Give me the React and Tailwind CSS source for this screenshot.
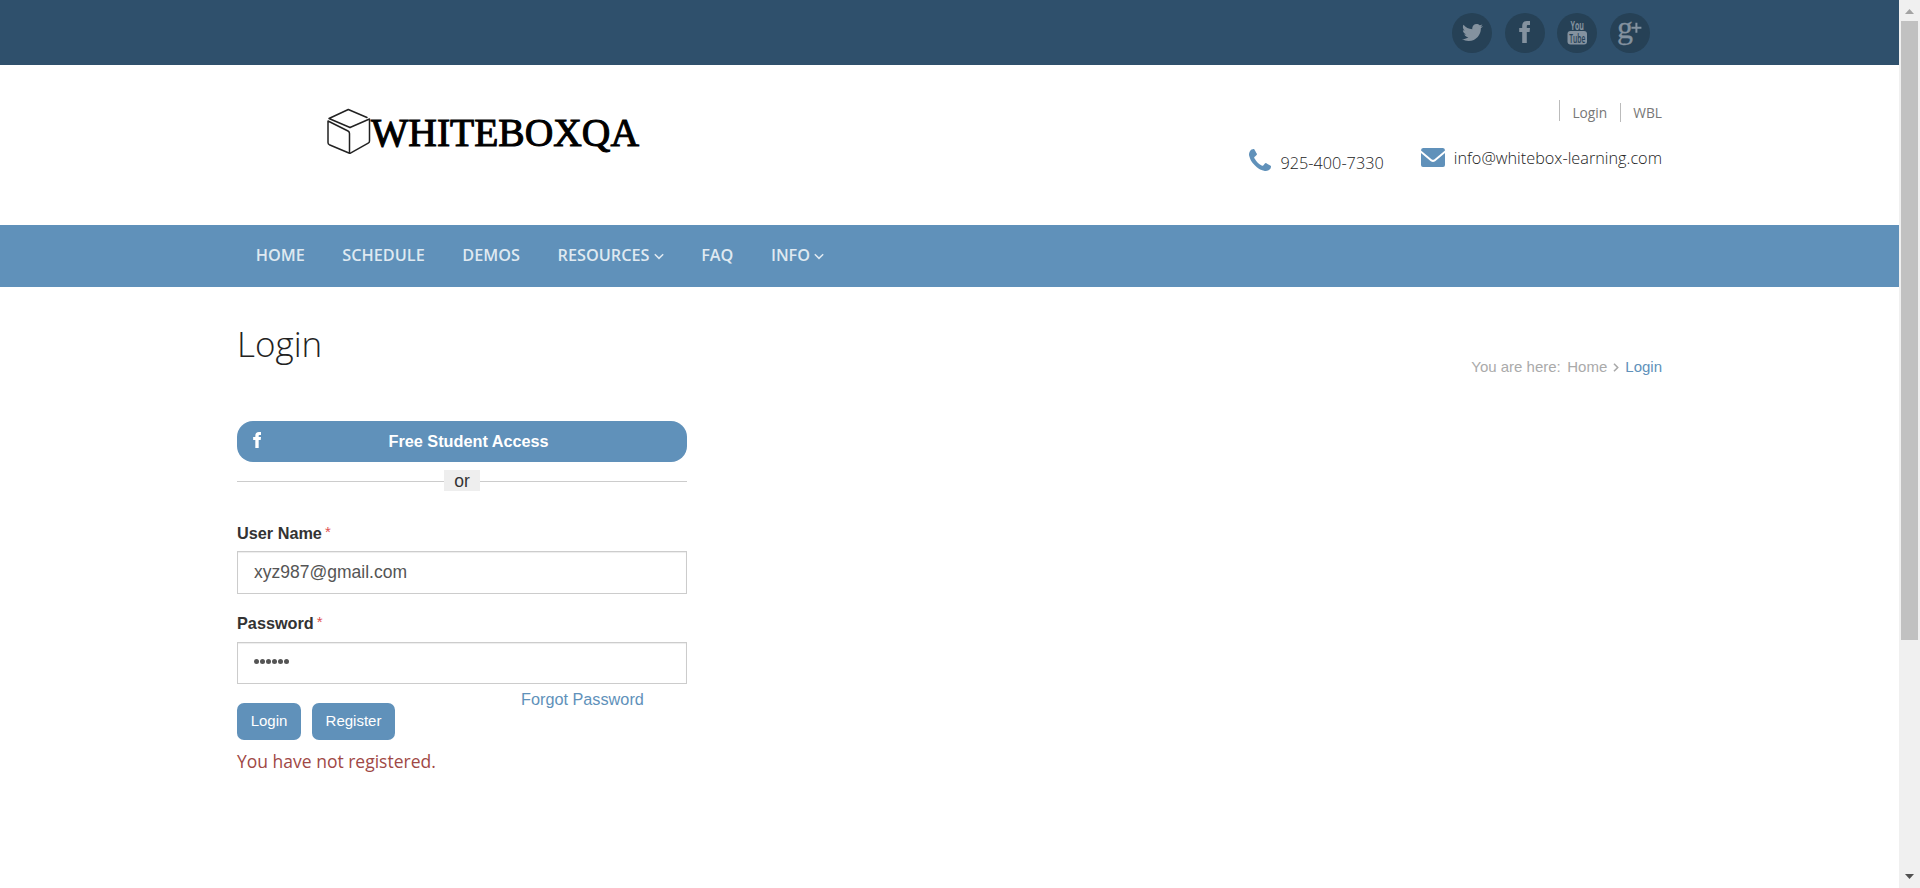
import { FaTwitter } from "react-icons/fa";

function FacebookMark({ className }) {
  return (
    <svg className={className} viewBox="0 0 11 22" fill="currentColor">
      <path d="M3.200 22V11H.2V7h3V5C3.200 1.800 5 0 8 0h3v4H9.200C8.100 4 7.800 4.400 7.800 5.300V7H11l-.4 4H7.800v11z" />
    </svg>
  );
}

function PhoneIcon({ className }) {
  return (
    <svg className={className} viewBox="0 0 1408 1408" fill="currentColor">
      <path d="M1408 1112q0 27-10 70.500T1377 1251q-21 50-122 106-94 51-186 51-27 0-53-3.500t-57.500-12.500-47-14.500T856 1357t-49-18q-98-35-175-83-127-79-264-216T152 776q-48-77-83-175-3-9-18-49t-20.500-55.500-14.500-47T3.500 392 0 339q0-92 51-186 56-101 106-122 25-11 68.500-21T296 0q14 0 21 3 18 6 53 76 11 19 30 54t35 63.500 31 53.500q3 4 17.500 25t21.500 35.500 7 28.500q0 20-28.500 50t-62 55-62 53-28.500 46q0 9 5 22.500t8.500 20.500 14 24 11.500 19q76 137 174 235t235 174q2 1 19 11.500t24 14 20.500 8.500 22.500 5q18 0 46-28.500t53-62 55-62 50-28.500q14 0 28.500 7t35.500 21.500 25 17.500q25 15 53.500 31t63.500 35 54 30q70 35 76 53 3 7 3 21z" />
    </svg>
  );
}

function YouTubeMark() {
  return (
    <svg width="22" height="38" viewBox="0 -6 22 38" fill="#84929f" className="overflow-visible">
      <text x="4.500" y="9.600" fontFamily="Open Sans, sans-serif" fontWeight="700" fontSize="12.500" textLength="13.500" lengthAdjust="spacingAndGlyphs">You</text>
      <rect x="1.500" y="11" width="19.500" height="13.500" rx="3" />
      <text x="3.300" y="22.500" fill="#264156" fontFamily="Open Sans, sans-serif" fontWeight="600" fontSize="12.500" textLength="16" lengthAdjust="spacingAndGlyphs">Tube</text>
    </svg>
  );
}

function GooglePlusMark() {
  return (
    <svg width="26" height="38" viewBox="0 0 26 38" fill="#84929f" stroke="#84929f" className="overflow-visible">
      <text x="0" y="23.500" fontFamily="Liberation Serif, serif" fontSize="32" strokeWidth="0.300">g</text>
      <path d="M19.400 8.700v10M14.400 13.700h10" strokeWidth="2" fill="none" />
    </svg>
  );
}

function Circle({ children }) {
  return (
    <a className="flex size-10 items-center justify-center rounded-full bg-[#264156] text-[#84929f]">{children}</a>
  );
}

function Logo() {
  return (
    <svg className="mt-[43px] ml-[89px]" width="316" height="52" viewBox="0 0 316 52">
      <g fill="none" stroke="#222" strokeWidth="1.500" strokeLinejoin="round" strokeLinecap="round">
        <path d="M41 9.500 22.300 1.500 3 10.500 24 19.500" />
        <path d="M2 13v21.500q0 1.500 1.300 2.200L23.500 45.300V25.500q0-1.700-1.500-2.500z" />
        <path d="M24 19.500 43.500 11v22q0 1.500-1.300 2.200L24 45.300" />
      </g>
      <text x="45" y="37.500" fontFamily="Liberation Serif, serif" fontSize="41" fill="#000" stroke="#000" strokeWidth="1.100" textLength="268" lengthAdjust="spacingAndGlyphs">WHITEBOXQA</text>
    </svg>
  );
}

function NavItem({ label, menu }) {
  return (
    <a className="flex items-center gap-[4px]">
      {label}
      {menu && (
        <svg className="mt-[3px]" width="10" height="7" viewBox="0 0 10 7" fill="none" stroke="currentColor" strokeWidth="1.500">
          <path d="M.8 1.200 5 5.400 9.200 1.200" />
        </svg>
      )}
    </a>
  );
}

function Field({ label, boxClass, children }) {
  return (
    <div>
      <label className="flex h-6 items-start text-[16.250px] leading-6 font-bold text-[#333]">
        {label}
        <span className="ml-[3px] text-[15px] leading-[22px] font-normal text-[#e05050]">*</span>
      </label>
      <div className={`flex items-center border border-[#ccc] px-[16px] text-[17.500px] text-[#555] shadow-[inset_0_1px_1px_rgba(0,0,0,0.075)] ${boxClass}`}>
        {children}
      </div>
    </div>
  );
}

export default function App() {
  return (
    <div className="flex h-[888px] w-[1920px] overflow-hidden bg-white font-['Liberation_Sans',Arial,sans-serif]">
      <div className="w-[1899px]">
        <div className="flex h-[65px] items-center gap-[12.700px] bg-[#2f506c] pl-[1452px]">
          <Circle><FaTwitter className="size-[21px]" /></Circle>
          <Circle><FacebookMark className="mb-[1px] h-[22px] w-[11px]" /></Circle>
          <Circle><YouTubeMark /></Circle>
          <Circle><GooglePlusMark /></Circle>
        </div>

        <header className="flex h-[160px] justify-between px-[237px] font-['Open_Sans',sans-serif]">
          <Logo />
          <div className="flex flex-col items-end">
            <div className="mt-[35px] flex h-[22px] text-[13.750px] text-[#777]">
              <span className="h-[21px] w-px bg-[#bbb]" />
              <span className="ml-3 leading-[26px]">Login</span>
              <span className="mt-[3px] ml-[13px] h-[19px] w-px bg-[#bbb]" />
              <span className="ml-3 leading-[26px]">WBL</span>
            </div>
            <div className="mt-[25px] flex text-[16.250px] font-light text-[#222]">
              <PhoneIcon className="mt-[2px] size-[22px] text-[#6091ba]" />
              <span className="mt-[4px] ml-[10px] leading-[24px]">925-400-7330</span>
              <svg className="mt-[1px] ml-[37px]" width="24" height="19" viewBox="0 0 24 19" fill="#6091ba">
                <path d="M2 0h20q2 0 2 2.500L13.500 11.300q-1.500 1-3 0L0 2.500Q0 0 2 0z" />
                <path d="M0 5l9.800 8.200q2.200 1.400 4.400 0L24 5v12q0 2-2 2H2q-2 0-2-2z" />
              </svg>
              <span className="-mt-px ml-[9px] leading-[24px]">info@whitebox-learning.com</span>
            </div>
          </div>
        </header>

        <nav className="flex h-[62px] items-center gap-[37.600px] bg-[#6091ba] pb-[2px] pl-[255.700px] font-['Open_Sans',sans-serif] text-[16.250px] font-semibold text-[#dfe9f1]">
          <NavItem label="HOME" />
          <NavItem label="SCHEDULE" />
          <NavItem label="DEMOS" />
          <NavItem label="RESOURCES" menu />
          <NavItem label="FAQ" />
          <NavItem label="INFO" menu />
        </nav>

        <main className="px-[237px]">
          <div className="flex justify-between">
            <h1 className="mt-[32px] font-['Open_Sans',sans-serif] text-[35px] leading-[50px] font-light text-[#222]">Login</h1>
            <div className="mt-[70px] flex text-[15px] leading-5 text-[#aaa]">
              <span>You are here:</span>
              <span className="ml-[6.500px]">Home</span>
              <svg className="mt-[6px] ml-[6px]" width="6" height="9" viewBox="0 0 6 9" fill="none" stroke="#aaa" strokeWidth="1.600"><path d="M1 .8 4.700 4.500 1 8.200" /></svg>
              <span className="ml-[6px] text-[#6091ba]">Login</span>
            </div>
          </div>

          <form className="mt-[44px] w-[450px]">
            <div className="flex h-[41px] items-center rounded-[16px] bg-[#6091ba] text-white">
              <FacebookMark className="mb-[3px] ml-[16px] h-[16px] w-[8px]" />
              <span className="ml-[127.500px] text-[16.250px] font-bold">Free Student Access</span>
            </div>
            <div className="mt-[8px] flex h-[21px] items-center">
              <span className="mt-[2px] h-px flex-1 bg-[#ccc]" />
              <span className="flex h-[21px] w-9 items-center justify-center bg-[#eee] pt-[2px] text-[17.500px] text-[#333]">or</span>
              <span className="mt-[2px] h-px flex-1 bg-[#ccc]" />
            </div>
            <div className="mt-[30px] flex flex-col gap-[17px]">
              <Field label="User Name" boxClass="mt-[6px] h-[43px]">xyz987@gmail.com</Field>
              <Field label="Password" boxClass="mt-[7px] h-[42px]">
                <span className="flex gap-[1.500px] pb-[3px]">
                  {[0, 1, 2, 3, 4, 5].map((i) => <i key={i} className="size-[4.600px] rounded-full bg-[#555]" />)}
                </span>
              </Field>
            </div>
            <div className="flex items-start text-[15px] text-white">
              <span className="mt-[19px] flex h-[37px] w-16 items-center justify-center rounded-[7px] bg-[#6091ba]">Login</span>
              <span className="mt-[19px] ml-[11px] flex h-[37px] w-[83px] items-center justify-center rounded-[7px] bg-[#6091ba]">Register</span>
              <a className="mt-[5px] ml-[126px] text-[16.250px] leading-5 text-[#6091ba]">Forgot Password</a>
            </div>
            <p className="mt-[9px] font-['Open_Sans',sans-serif] text-[17.500px] leading-[25px] text-[#a04845]">You have not registered.</p>
          </form>
        </main>
      </div>

      <div className="flex h-full w-[21px] flex-col items-center bg-[#f0f0f0]">
        <svg className="mt-[9px]" width="9" height="5" viewBox="0 0 9 5" fill="#a3a3a3"><path d="M4.500 0 9 5H0z" /></svg>
        <div className="mt-[7px] h-[619px] w-[17px] bg-[#c1c1c1]" />
        <svg className="mt-auto mb-[9px]" width="9" height="5" viewBox="0 0 9 5" fill="#505050"><path d="M0 0h9L4.500 5z" /></svg>
      </div>
    </div>
  );
}
